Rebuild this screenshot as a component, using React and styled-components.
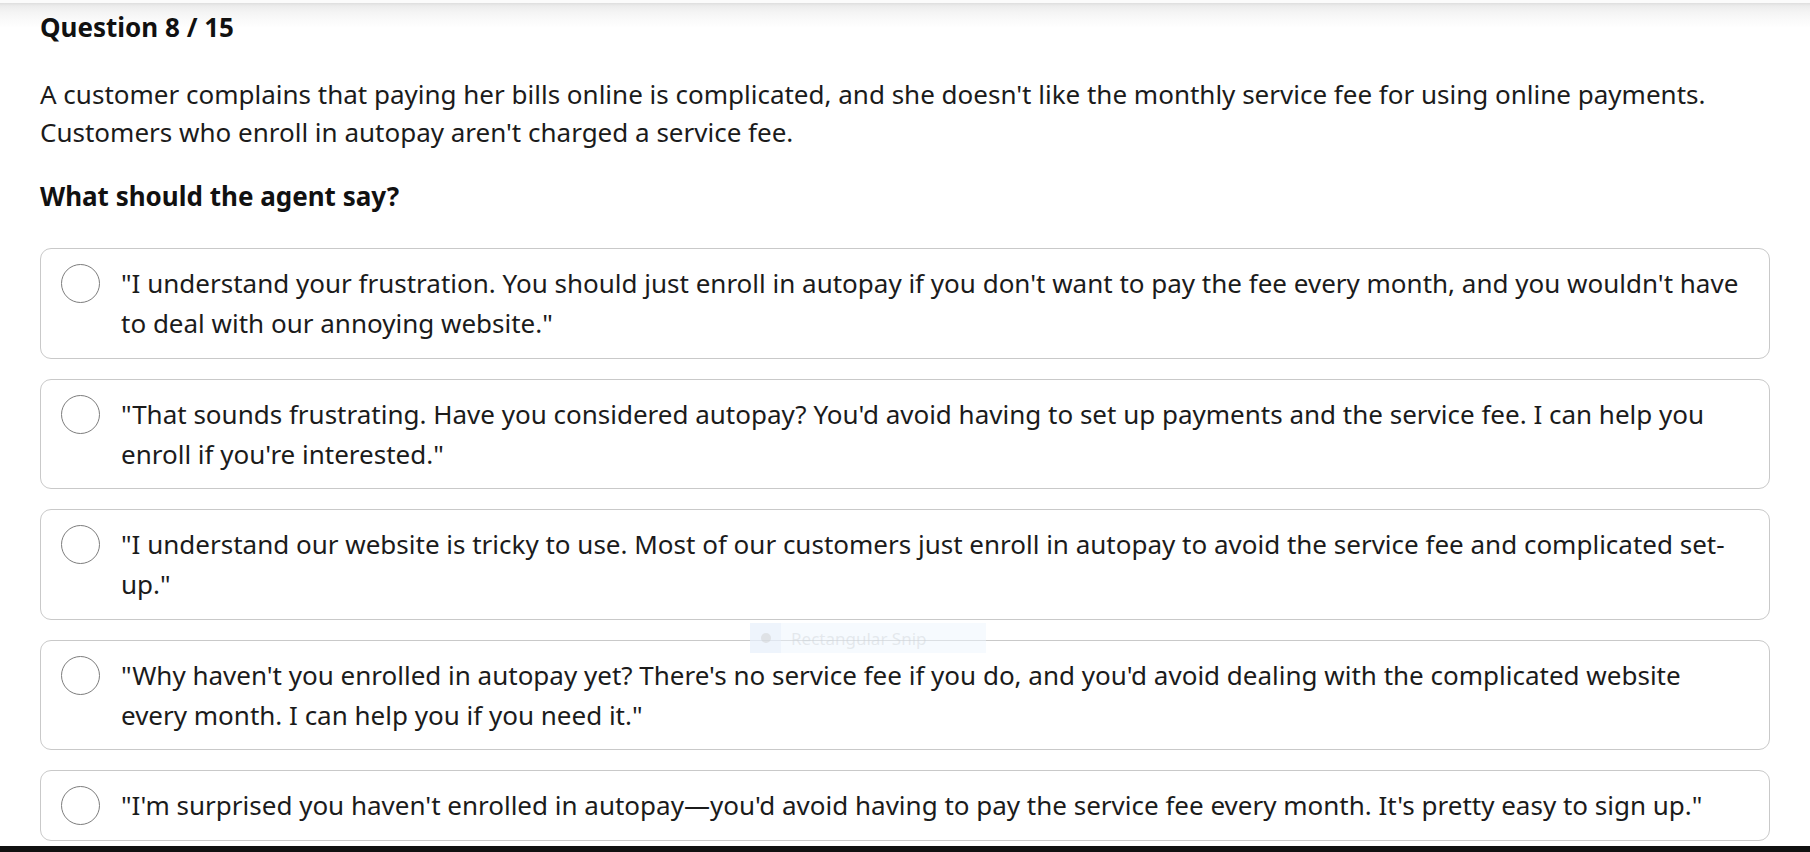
import React from 'react';
import styled, { createGlobalStyle } from 'styled-components';

const GlobalStyle = createGlobalStyle`
  html, body {
    margin: 0;
    padding: 0;
    background: #fff;
    overflow: hidden;
  }
  body {
    font-family: "Noto Sans", "Open Sans", sans-serif;
    color: #1b1b1b;
  }
`;

const options = [
  `"I understand your frustration. You should just enroll in autopay if you don't want to pay the fee every month, and you wouldn't have to deal with our annoying website."`,
  `"That sounds frustrating. Have you considered autopay? You'd avoid having to set up payments and the service fee. I can help you enroll if you're interested."`,
  `"I understand our website is tricky to use. Most of our customers just enroll in autopay to avoid the service fee and complicated set-up."`,
  `"Why haven't you enrolled in autopay yet? There's no service fee if you do, and you'd avoid dealing with the complicated website every month. I can help you if you need it."`,
  `"I'm surprised you haven't enrolled in autopay\u2014you'd avoid having to pay the service fee every month. It's pretty easy to sign up."`,
];

function App() {
  return (
    <>
      <GlobalStyle />
      <Page>
        <Content>
          <Title>Question 8 / 15</Title>
          <Scenario>
            A customer complains that paying her bills online is complicated, and she doesn't like the monthly service fee for using online payments.
            Customers who enroll in autopay aren't charged a service fee.
          </Scenario>
          <Prompt>What should the agent say?</Prompt>
          <OptionList>
            {options.map((text, i) => (
              <Option key={i}>
                <Radio />
                <OptionText>{text}</OptionText>
              </Option>
            ))}
          </OptionList>
        </Content>
        <SnipToast>
          <SnipIcon><span /></SnipIcon>
          <SnipLabel>Rectangular Snip</SnipLabel>
        </SnipToast>
        <BottomEdge />
      </Page>
    </>
  );
}

export default App;

const Page = styled.div`
  position: relative;
  height: 852px;
  display: flex;
  flex-direction: column;
  background: linear-gradient(
    to bottom,
    #fbfbfb 0,
    #fbfbfb 3px,
    #dedede 3px,
    #ececec 6px,
    #f4f4f4 12px,
    #fafafa 20px,
    #fff 28px
  );
`;

const Content = styled.div`
  flex: 1;
  padding: 9px 40px 0 40px;
`;

const Title = styled.h1`
  margin: 0;
  font-size: 26px;
  line-height: 36px;
  font-weight: 700;
  color: #111;
`;

const Scenario = styled.p`
  margin: 30px 0 0 0;
  font-size: 26px;
  line-height: 38px;
  color: #1b1b1b;
`;

const Prompt = styled.h2`
  margin: 26px 0 0 0;
  font-size: 26px;
  line-height: 38px;
  font-weight: 700;
  color: #111;
`;

const OptionList = styled.div`
  margin-top: 33px;
  display: flex;
  flex-direction: column;
  gap: 20px;
`;

const Option = styled.label`
  display: flex;
  align-items: flex-start;
  gap: 21px;
  padding: 14px 20px 14.5px 20px;
  border: 1px solid #c9c9c9;
  border-radius: 11px;
  background: #fff;
  cursor: pointer;
`;

const Radio = styled.span`
  flex: none;
  box-sizing: border-box;
  width: 39px;
  height: 39px;
  margin-top: 1px;
  border: 1.5px solid #7d7d7d;
  border-radius: 50%;
  background: #fff;
`;

const OptionText = styled.span`
  font-size: 26px;
  line-height: 40px;
  color: #1b1b1b;
`;

const SnipToast = styled.div`
  position: absolute;
  left: 750px;
  top: 623px;
  width: 236px;
  height: 30px;
  display: flex;
  align-items: center;
  background: rgba(238, 245, 253, 0.5);
  font-family: "Segoe UI", "Noto Sans", sans-serif;
`;

const SnipIcon = styled.div`
  width: 31px;
  height: 100%;
  display: flex;
  align-items: center;
  justify-content: center;
  background: rgba(228, 238, 250, 0.45);

  span {
    width: 10px;
    height: 10px;
    border-radius: 50%;
    background: rgba(205, 205, 205, 0.45);
  }
`;

const SnipLabel = styled.span`
  margin-left: 10px;
  font-size: 17px;
  color: rgba(205, 210, 215, 0.45);
`;

const BottomEdge = styled.div`
  height: 6px;
  background: #111;
`;
